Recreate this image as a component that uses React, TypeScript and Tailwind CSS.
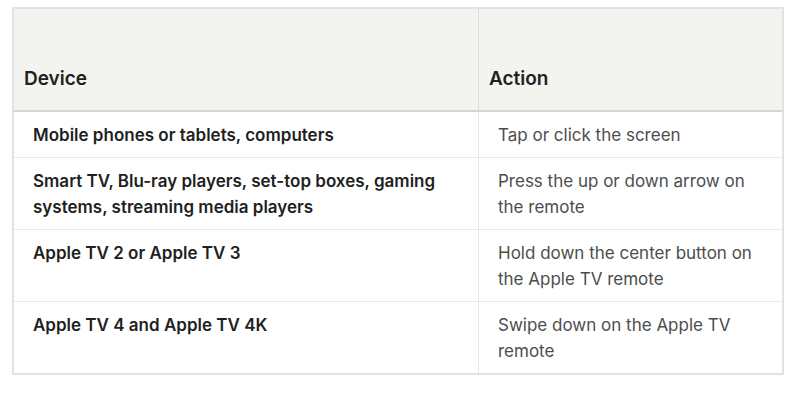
export default function App() {
  const rows: [string[], string[]][] = [
    [["Mobile phones or tablets, computers"], ["Tap or click the screen"]],
    [["Smart TV, Blu-ray players, set-top boxes, gaming", "systems, streaming media players"], ["Press the up or down arrow on", "the remote"]],
    [["Apple TV 2 or Apple TV 3"], ["Hold down the center button on", "the Apple TV remote"]],
    [["Apple TV 4 and Apple TV 4K"], ["Swipe down on the Apple TV", "remote"]],
  ];
  return (
    <div className="w-[800px] h-[400px] bg-white pt-[7px] pl-[12px]" style={{ fontFamily: "Inter, 'Noto Sans', sans-serif" }}>
      <div className="w-[772px] border-2 border-[#e2e2e2] text-[#221f1f]">
        <div className="flex h-[103px] bg-[#f3f3ef] border-b-2 border-[#d6d6d2]">
          <div className="w-[465px] border-r border-[#dcdcd8] flex items-end pl-[10px] pb-[17px] text-[19px] font-semibold">Device</div>
          <div className="flex-1 flex items-end pl-[10px] pb-[17px] text-[19px] font-semibold">Action</div>
        </div>
        {rows.map((r, i) => (
          <div key={i} className={"flex text-[17px] leading-[26px] " + (i < rows.length - 1 ? "border-b border-[#e8e8e8]" : "")}>
            <div className="w-[465px] border-r border-[#e8e8e8] pl-[19px] pt-[10px] pb-[9px] font-semibold">
              {r[0].map((l, j) => <div key={j} className="whitespace-nowrap">{l}</div>)}
            </div>
            <div className="flex-1 pl-[19px] pt-[10px] pb-[9px] text-[#4d4d4d]">
              {r[1].map((l, j) => <div key={j} className="whitespace-nowrap">{l}</div>)}
            </div>
          </div>
        ))}
      </div>
    </div>
  );
}
